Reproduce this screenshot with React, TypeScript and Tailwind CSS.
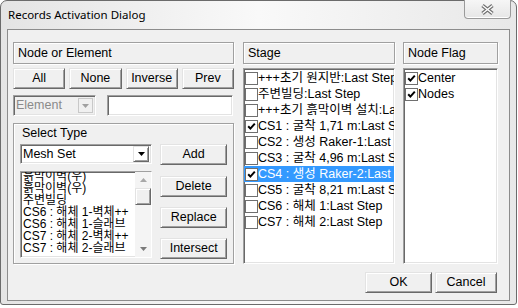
import React from "react";

const F = "font-['Liberation_Sans','Noto_Sans_CJK_KR',sans-serif]";
const sunken =
  "border border-t-[#a0a0a0] border-l-[#a0a0a0] border-b-white border-r-white shadow-[inset_1px_1px_0_#696969,inset_-1px_-1px_0_#e3e3e3]";
const raised =
  "border border-t-[#e3e3e3] border-l-[#e3e3e3] border-b-[#696969] border-r-[#696969] shadow-[inset_1px_1px_0_#ffffff,inset_-1px_-1px_0_#a0a0a0]";
const etched = "border border-[#a0a0a0] shadow-[inset_1px_1px_0_#ffffff,1px_1px_0_#ffffff]";

function Btn({ children, className = "" }: { children: React.ReactNode; className?: string }) {
  return (
    <div className={`flex items-center justify-center bg-[#f0f0f0] ${raised} ${className}`}>
      {children}
    </div>
  );
}

function Tri({ color = "#000", up = false }: { color?: string; up?: boolean }) {
  return (
    <svg width="7" height="4" viewBox="0 0 7 4">
      <polygon points={up ? "0,4 7,4 3.5,0" : "0,0 7,0 3.5,4"} fill={color} />
    </svg>
  );
}

function Check({ checked }: { checked?: boolean }) {
  return (
    <span className="w-[13px] h-[13px] border border-[#6f6f6f] bg-white flex items-center justify-center shrink-0">
      {checked && (
        <svg width="9" height="9" viewBox="0 0 9 9">
          <path d="M1.2 4.2 L3.4 6.6 L7.8 1.6" stroke="#000" strokeWidth="2" fill="none" />
        </svg>
      )}
    </span>
  );
}

const stages: { t: string; c?: boolean; s?: boolean }[] = [
  { t: "+++초기 원지반:Last Step" },
  { t: "주변빌딩:Last Step" },
  { t: "+++초기 흙막이벽 설치:Last Step" },
  { t: "CS1 : 굴착 1,71 m:Last Step", c: true },
  { t: "CS2 : 생성 Raker-1:Last Step" },
  { t: "CS3 : 굴착 4,96 m:Last Step" },
  { t: "CS4 : 생성 Raker-2:Last Step", c: true, s: true },
  { t: "CS5 : 굴착 8,21 m:Last Step" },
  { t: "CS6 : 해체 1:Last Step" },
  { t: "CS7 : 해체 2:Last Step" },
];

const types = [
  "흙막이벽(우)",
  "흙막이벽(우)",
  "주변빌딩",
  "CS6 : 해체 1-벽체++",
  "CS6 : 해체 1-슬래브",
  "CS7 : 해체 2-벽체++",
  "CS7 : 해체 2-슬래브",
];

export default function App() {
  return (
    <div className={`w-[518px] h-[308px] bg-white ${F} text-[12.5px] text-black`}>
      <div className="w-[517px] h-[305px] flex flex-col border border-[#6b6b6b] rounded-t-[7px] rounded-b-[3px] bg-gradient-to-r from-[#e4e4e4] via-[#f9f9f9] to-[#e8e8e8] px-[6px]">
        {/* title bar */}
        <div className="h-[28px] flex items-start justify-between shrink-0">
          <div className="self-center pl-[1px] font-['Noto_Sans',sans-serif] text-[11.5px] text-black">
            Records Activation Dialog
          </div>
          <div className="w-[47px] h-[19px] -mr-[1px] -mt-[1px] border border-[#9a9a9a] border-t-0 rounded-b-[4px] bg-gradient-to-b from-[#f6f6f6] to-[#e6e6e6] flex items-center justify-center shadow-[inset_0_-1px_0_#ffffff]">
            <svg width="15" height="11" viewBox="0 0 15 11">
              <path d="M2.5 1.5 L12.5 9.5 M12.5 1.5 L2.5 9.5" stroke="#707070" strokeWidth="3.6" />
              <path d="M2.5 1.5 L12.5 9.5 M12.5 1.5 L2.5 9.5" stroke="#ffffff" strokeWidth="1.4" />
            </svg>
          </div>
        </div>
        {/* client */}
        <div className="flex-1 mb-[3px] border border-[#8c8c8c] bg-[#f0f0f0] pl-[5px] pt-[12px] flex flex-col">
          <div className="flex">
            {/* left column */}
            <div className="w-[221px] flex flex-col">
              <div className={`h-[22px] ${etched} flex items-center pl-[4px]`}>Node or Element</div>
              <div className="mt-[4px] h-[21px] grid grid-cols-4 gap-x-[4px]">
                <Btn>All</Btn>
                <Btn>None</Btn>
                <Btn>Inverse</Btn>
                <Btn>Prev</Btn>
              </div>
              <div className="mt-[6px] h-[21px] flex">
                <div className={`w-[83px] ${sunken} bg-[#f0f0f0] flex items-center pl-[2px] pr-[2px]`}>
                  <span className="flex-1 text-[#8a8a8a]">Element</span>
                  <div className="w-[15px] h-[15px] border border-[#c8c8c8] bg-[#f0f0f0] flex items-center justify-center">
                    <Tri color="#a0a0a0" />
                  </div>
                </div>
                <div className={`ml-[11px] w-[126px] ${sunken} bg-white`} />
              </div>
              <div className={`mt-[7px] h-[141px] ${etched} px-[6px]`}>
                <div className="h-[20px] leading-[18px] pl-[2px]">Select Type</div>
                <div className="flex">
                  <div className="w-[133px] flex flex-col">
                    <div className={`h-[20px] ${sunken} bg-white flex items-center pl-[2px] pr-[2px]`}>
                      <span className="flex-1">Mesh Set</span>
                      <div className={`w-[16px] h-[16px] ${raised} flex items-center justify-center`}>
                        <Tri />
                      </div>
                    </div>
                    <div className={`mt-[7px] h-[87px] ${sunken} bg-white flex overflow-hidden`}>
                      <div className="flex-1 overflow-hidden pl-[2px] text-[12px]">
                        <div className="-mt-[2px]">
                          {types.map((t, i) => (
                            <div key={i} className="h-[12px] leading-[12px] whitespace-nowrap">
                              {t}
                            </div>
                          ))}
                        </div>
                      </div>
                      <div className="w-[16px] bg-[#f4f4f4] flex flex-col">
                        <div className="h-[16px] flex items-center justify-center">
                          <Tri up color="#a8a8a8" />
                        </div>
                        <div className={`h-[17px] bg-[#f0f0f0] ${raised}`} />
                        <div className="flex-1" />
                        <div className="h-[16px] flex items-center justify-center">
                          <Tri color="#7a7a7a" />
                        </div>
                      </div>
                    </div>
                  </div>
                  <div className="ml-[8px] w-[67px] flex flex-col">
                    <Btn className="h-[21px]">Add</Btn>
                    <Btn className="h-[21px] mt-[11px]">Delete</Btn>
                    <Btn className="h-[21px] mt-[10px]">Replace</Btn>
                    <Btn className="h-[21px] mt-[10px]">Intersect</Btn>
                  </div>
                </div>
              </div>
            </div>
            {/* stage column */}
            <div className="w-[152px] ml-[9px] flex flex-col">
              <div className={`h-[22px] ${etched} flex items-center pl-[4px]`}>Stage</div>
              <div className={`mt-[4px] h-[196px] ${sunken} bg-white overflow-hidden pt-[1px]`}>
                {stages.map((s, i) => (
                  <div
                    key={i}
                    className={`h-[16px] flex items-center whitespace-nowrap overflow-hidden pl-[1px] ${
                      s.s ? "bg-[#3399ff] text-white" : ""
                    }`}
                  >
                    <Check checked={s.c} />
                    <span>{s.t}</span>
                  </div>
                ))}
              </div>
            </div>
            {/* node flag column */}
            <div className="w-[95px] ml-[8px] flex flex-col">
              <div className={`h-[22px] ${etched} flex items-center pl-[4px]`}>Node Flag</div>
              <div className={`mt-[4px] h-[196px] ${sunken} bg-white overflow-hidden pt-[1px]`}>
                {["Center", "Nodes"].map((t) => (
                  <div key={t} className="h-[16px] flex items-center whitespace-nowrap pl-[1px]">
                    <Check checked />
                    <span>{t}</span>
                  </div>
                ))}
              </div>
            </div>
          </div>
          <div className="mt-[8px] flex justify-end pr-[12px] gap-[3px]">
            <Btn className="w-[67px] h-[21px]">OK</Btn>
            <Btn className="w-[62px] h-[21px]">Cancel</Btn>
          </div>
        </div>
      </div>
    </div>
  );
}
